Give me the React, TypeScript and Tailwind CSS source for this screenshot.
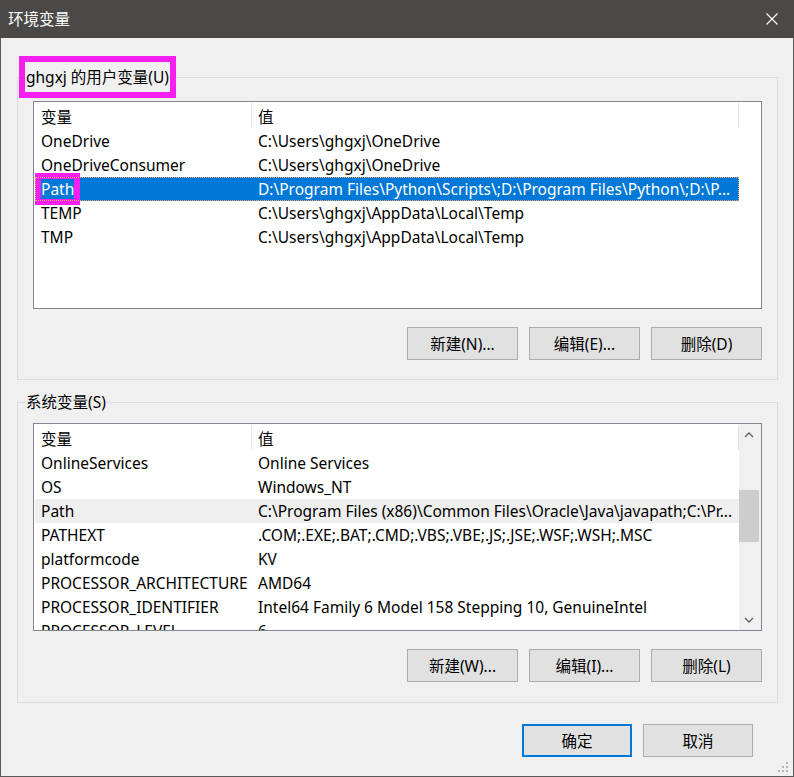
import React from "react";

type Row = { name: string; value: string; kind?: "selected" | "hover"; mark?: boolean };

const userRows: Row[] = [
  { name: "OneDrive", value: "C:\\Users\\ghgxj\\OneDrive" },
  { name: "OneDriveConsumer", value: "C:\\Users\\ghgxj\\OneDrive" },
  { name: "Path", value: "D:\\Program Files\\Python\\Scripts\\;D:\\Program Files\\Python\\;D:\\P...", kind: "selected", mark: true },
  { name: "TEMP", value: "C:\\Users\\ghgxj\\AppData\\Local\\Temp" },
  { name: "TMP", value: "C:\\Users\\ghgxj\\AppData\\Local\\Temp" },
];

const sysRows: Row[] = [
  { name: "OnlineServices", value: "Online Services" },
  { name: "OS", value: "Windows_NT" },
  { name: "Path", value: "C:\\Program Files (x86)\\Common Files\\Oracle\\Java\\javapath;C:\\Pr...", kind: "hover" },
  { name: "PATHEXT", value: ".COM;.EXE;.BAT;.CMD;.VBS;.VBE;.JS;.JSE;.WSF;.WSH;.MSC" },
  { name: "platformcode", value: "KV" },
  { name: "PROCESSOR_ARCHITECTURE", value: "AMD64" },
  { name: "PROCESSOR_IDENTIFIER", value: "Intel64 Family 6 Model 158 Stepping 10, GenuineIntel" },
  { name: "PROCESSOR_LEVEL", value: "6" },
];

function Header() {
  return (
    <div className="flex h-[27px] shrink-0">
      <div className="w-[216px] pl-[6px] pt-[3px] leading-[24px]">变量</div>
      <div className="w-px bg-[#e5e5e5] my-[1px]" />
      <div className="w-[486px] pl-[6px] pt-[3px] leading-[24px]">值</div>
      <div className="w-px bg-[#e5e5e5] my-[1px]" />
    </div>
  );
}

function ListRow({ r }: { r: Row }) {
  const base =
    r.kind === "selected"
      ? "flex h-[24px] w-[704px] shrink-0 pt-[1px] leading-[23px] bg-[#0078d7] text-white outline-1 outline-dotted outline-[#f3a868] -outline-offset-1"
      : r.kind === "hover"
      ? "flex h-[24px] w-[704px] shrink-0 pt-[1px] leading-[23px] bg-[#efefef] text-black"
      : "flex h-[24px] w-[704px] shrink-0 pt-[1px] leading-[23px] text-black";
  return (
    <div className={base}>
      <div className="w-[217px] pl-[6px] whitespace-nowrap overflow-visible">
        {r.mark ? (
          <span className="inline-block leading-[20px] outline-[6px] outline-solid outline-[#f520f0]">{r.name}</span>
        ) : (
          r.name
        )}
      </div>
      <div className="flex-1 pl-[6px] whitespace-nowrap overflow-hidden">{r.value}</div>
    </div>
  );
}

function Btn({ label, primary, narrow }: { label: string; primary?: boolean; narrow?: boolean }) {
  return (
    <button
      className={
        primary
          ? "w-[110px] h-[33px] bg-[#e1e1e1] border-2 border-[#0078d7] text-[15.5px] text-black leading-[20px]"
          : narrow
          ? "w-[110px] h-[33px] bg-[#e1e1e1] border border-[#adadad] text-[15.5px] text-black leading-[20px]"
          : "w-[111px] h-[33px] bg-[#e1e1e1] border border-[#adadad] text-[15.5px] text-black leading-[20px]"
      }
    >
      {label}
    </button>
  );
}

function Chevron({ up }: { up?: boolean }) {
  return (
    <svg width="10" height="6" viewBox="0 0 10 6">
      <path
        d={up ? "M1 5 L5 1 L9 5" : "M1 1 L5 5 L9 1"}
        fill="none"
        stroke="#606060"
        strokeWidth="1.3"
      />
    </svg>
  );
}

export default function App() {
  return (
    <div className="w-[794px] h-[777px] bg-[#f0f0f0] border-x border-b border-[#5a5a5a] flex flex-col relative font-['Noto_Sans','Noto_Sans_CJK_SC',sans-serif] text-[15.5px] text-black">
      {/* Title bar */}
      <div className="h-[38px] -mx-px bg-[#4b4947] flex items-center justify-between pl-[8px] pr-[16px] shrink-0">
        <span className="text-white text-[15.5px] leading-[20px]">环境变量</span>
        <svg width="12" height="12" viewBox="0 0 12 12">
          <path d="M0.5 0.5 L11.5 11.5 M11.5 0.5 L0.5 11.5" stroke="#ffffff" strokeWidth="1.1" />
        </svg>
      </div>

      <div className="flex-1 pl-[16px] pr-[15px] pt-[24px] flex flex-col">
        {/* User variables */}
        <fieldset className="border border-[#dcdcdc]">
          <legend className="ml-[7px] px-[1px] py-[5px] leading-[20px] outline-[6px] outline-solid outline-[#f520f0]">
            ghgxj 的用户变量(U)
          </legend>
          <div className="px-[15px] pb-[19px]">
            <div className="mt-[9px] h-[208px] border border-[#828790] bg-white pl-[1px] overflow-hidden flex flex-col">
              <Header />
              {userRows.map((r) => (
                <ListRow key={r.name} r={r} />
              ))}
            </div>
            <div className="mt-[18px] flex justify-end gap-[11px]">
              <Btn label="新建(N)..." />
              <Btn label="编辑(E)..." />
              <Btn label="删除(D)" />
            </div>
          </div>
        </fieldset>

        {/* System variables */}
        <fieldset className="mt-[12px] border border-[#dcdcdc]">
          <legend className="ml-[7px] px-[1px] leading-[20px]">系统变量(S)</legend>
          <div className="px-[15px] pb-[20px]">
            <div className="mt-[11px] h-[208px] border border-[#828790] bg-white overflow-hidden flex">
              <div className="w-[705px] pl-[1px] flex flex-col overflow-hidden">
                <Header />
                {sysRows.map((r) => (
                  <ListRow key={r.name} r={r} />
                ))}
              </div>
              <div className="flex-1 bg-[#f0f0f0] flex flex-col">
                <div className="h-[21px] flex items-center justify-center pr-[2px]">
                  <Chevron up />
                </div>
                <div className="flex-1 pr-[2px]">
                  <div className="mt-[45px] h-[52px] bg-[#cdcdcd]" />
                </div>
                <div className="h-[21px] flex items-center justify-center pr-[2px]">
                  <Chevron />
                </div>
              </div>
            </div>
            <div className="mt-[18px] flex justify-end gap-[11px]">
              <Btn label="新建(W)..." />
              <Btn label="编辑(I)..." />
              <Btn label="删除(L)" />
            </div>
          </div>
        </fieldset>

        <div className="mt-[21px] pr-[25px] flex justify-end gap-[11px]">
          <Btn label="确定" primary />
          <Btn label="取消" narrow />
        </div>
      </div>

      {/* Resize grip */}
      <svg className="absolute right-[3px] bottom-[2px]" width="12" height="12" viewBox="0 0 12 12">
        <rect x="8" y="0" width="2" height="2" fill="#b4b4b4" />
        <rect x="4" y="4" width="2" height="2" fill="#b4b4b4" />
        <rect x="8" y="4" width="2" height="2" fill="#b4b4b4" />
        <rect x="0" y="8" width="2" height="2" fill="#b4b4b4" />
        <rect x="4" y="8" width="2" height="2" fill="#b4b4b4" />
        <rect x="8" y="8" width="2" height="2" fill="#b4b4b4" />
      </svg>
    </div>
  );
}
